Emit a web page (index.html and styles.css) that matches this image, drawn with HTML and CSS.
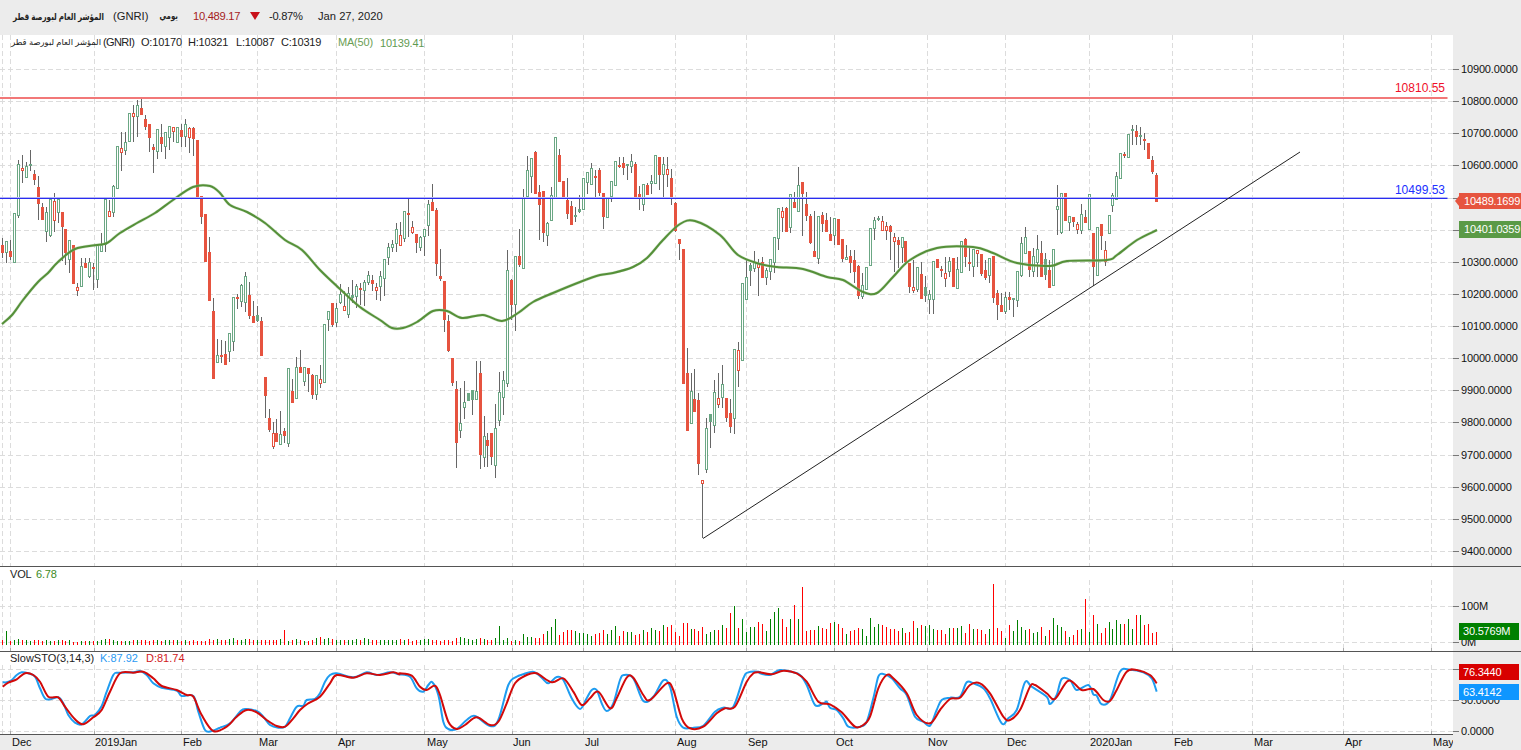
FILE: index.html
```html
<!DOCTYPE html>
<html lang="en">
<head>
<meta charset="utf-8">
<title>GNRI chart</title>
<link rel="stylesheet" href="styles.css">
</head>
<body>
<div class="app">
  <header class="topbar">
    <span class="name-ar" dir="rtl">المؤشر العام لبورصة قطر</span>
    <span class="sym">(GNRI)</span>
    <span class="period-ar" dir="rtl">يومي</span>
    <span class="price">10,489.17</span>
    <svg class="down" width="10" height="8" viewBox="0 0 10 8"><path d="M0 0H10L5 8Z" fill="#c8101a"/></svg>
    <span class="pct">-0.87%</span>
    <span class="date">Jan 27, 2020</span>
  </header>

  <section class="pane pane-main">
    <div class="plot">
      <svg id="main" class="layer" viewBox="0 35 1453 531"></svg>
      <div class="legend">
        <span class="leg-ar" dir="rtl">المؤشر العام لبورصة قطر</span>
        <span class="leg-sym">(GNRI)</span>
        <span class="leg-o">O:10170</span>
        <span class="leg-h">H:10321</span>
        <span class="leg-l">L:10087</span>
        <span class="leg-c">C:10319</span>
        <span class="leg-ma">MA(50)</span>
        <span class="leg-mav">10139.41</span>
      </div>
      <span class="level level-red">10810.55</span>
      <span class="level level-blue">10499.53</span>
    </div>
    <div class="axis" id="main-axis">
      <span class="tag tag-close">10489.1699</span>
      <span class="tag tag-ma">10401.0359</span>
    </div>
  </section>

  <section class="pane pane-vol">
    <div class="plot">
      <svg id="vol" class="layer" viewBox="0 567 1453 84"></svg>
      <div class="legend">
        <span class="leg-vol">VOL</span>
        <span class="leg-volv">6.78</span>
      </div>
    </div>
    <div class="axis" id="vol-axis">
      <span class="tag tag-vol">30.5769M</span>
    </div>
  </section>

  <section class="pane pane-sto">
    <div class="plot">
      <svg id="sto" class="layer" viewBox="0 652 1453 82"></svg>
      <div class="legend">
        <span class="leg-sto">SlowSTO(3,14,3)</span>
        <span class="leg-k">K:87.92</span>
        <span class="leg-d">D:81.74</span>
      </div>
    </div>
    <div class="axis" id="sto-axis">
      <span class="tag tag-d">76.3440</span>
      <span class="tag tag-k">63.4142</span>
    </div>
  </section>

  <footer class="timeaxis">
    <div class="timeplot" id="time"></div>
  </footer>
</div>
<script src="chart.js"></script>
</body>
</html>
```
FILE: styles.css
```css
* { box-sizing: border-box; }
html, body { margin: 0; padding: 0; background: #fff; overflow: hidden; }
body { font-family: "Liberation Sans", "DejaVu Sans", sans-serif; color: #222; }
.app { width: 1521px; height: 750px; display: flex; flex-direction: column; }

.topbar { height: 35px; background: #ececec; display: flex; align-items: center; padding-left: 13px; font-size: 11.2px; white-space: nowrap; padding-bottom: 3px; }
.name-ar { font-weight: bold; font-size: 9.5px; width: 91px; transform: scaleX(.757); transform-origin: right center; }
.sym { margin-left: 9px; width: 34px; }
.period-ar { margin-left: 12px; font-weight: bold; font-size: 9px; width: 19px; transform: scaleX(.78); transform-origin: right center; }
.price { margin-left: 15px; color: #a51c1c; width: 47px; letter-spacing: -.3px; }
.down { margin-left: 10px; }
.pct { margin-left: 9px; width: 35px; letter-spacing: -.3px; }
.date { margin-left: 14px; }

.pane { display: flex; border-bottom: 1px solid #555; }
.pane-main { height: 532px; }
.pane-vol { height: 85px; }
.pane-sto { height: 83px; border-bottom: 0; }
.pane-sto .plot { border-bottom: 1px solid #555; }

.plot { position: relative; width: 1453px; height: 100%; background: #fff; }
.layer { position: absolute; left: 0; top: 0; width: 1453px; height: 100%; display: block; }
.axis { position: relative; width: 68px; background: #ececec; font-size: 11px; color: #111; }

.legend { position: absolute; left: 10px; top: 0; display: flex; align-items: center; height: 14px; font-size: 11px; white-space: nowrap; letter-spacing: -.2px; }
.pane-sto .legend { top: -1px; letter-spacing: 0; }
.leg-ar { font-size: 8.4px; width: 90px; letter-spacing: 0; margin-left: 1px; }
.leg-sym { margin-left: 2px; width: 32px; letter-spacing: -.6px; }
.leg-o { margin-left: 6px; width: 41px; }
.leg-h { margin-left: 6px; width: 42px; }
.leg-l { margin-left: 6px; width: 39px; }
.leg-c { margin-left: 6px; width: 40px; }
.leg-ma { margin-left: 17px; width: 36px; color: #6b9e55; }
.leg-mav { margin-left: 6px; color: #5f9a52; margin-top: 1px; }
.leg-vol { width: 20px; }
.leg-volv { margin-left: 6px; color: #3c8a1e; }
.leg-sto { width: 82px; }
.leg-k { margin-left: 8px; color: #2b9af3; width: 38px; }
.leg-d { margin-left: 8px; color: #d0201c; }

.level { position: absolute; right: 8px; font-size: 12px; line-height: 14px; }
.level-red { top: 46px; color: #f0102a; }
.level-blue { top: 148px; color: #2030ff; }

.tick { position: absolute; left: 0; padding-left: 8px; height: 14px; line-height: 14px; white-space: nowrap; letter-spacing: -.15px; }
.tick::before { content: ""; position: absolute; left: 0; top: 7px; width: 6px; height: 1px; background: #777; }

.tag { position: absolute; left: 6px; color: #fff; font-size: 11px; letter-spacing: -.2px; line-height: 16px; height: 16px; padding-left: 4px; z-index: 2; white-space: nowrap; }
.tag-close { right: 0; top: 158px; padding-left: 5px; background: #e6543f; }
.tag-close::before { content: ""; position: absolute; left: -4px; top: 3px; border-style: solid; border-width: 5px 4px 5px 0; border-color: transparent #e6543f transparent transparent; }
.tag-ma { right: 0; top: 186px; height: 17px; padding-left: 5px; background: #5a9a46; }
.tag-vol { width: 60px; top: 56px; height: 17px; background: #008000; }
.tag-d { width: 60px; top: 12px; background: #d80000; }
.tag-k { width: 60px; top: 32px; background: #0f96ff; }

.timeaxis { height: 15px; background: #ececec; position: relative; font-size: 11px; }
.timeplot { position: relative; width: 1453px; height: 15px; overflow: hidden; }
.timelabel { position: absolute; top: 0; line-height: 14px; color: #111; white-space: nowrap; }
```
FILE: chart.js
```js
var NS = 'http://www.w3.org/2000/svg';
function el(parent, name, attrs) {
  var e = document.createElementNS(NS, name);
  for (var k in attrs) e.setAttribute(k, attrs[k]);
  parent.appendChild(e);
  return e;
}

/* Candles: type top bottom high low (page pixels). g hollow green, f filled green, r filled red, o hollow red */
var C = "r245,253,238,258 g241,253,241,263 r251,257,240,260 g213,263 g164,216,160,218 o168,171,155,183 g166,178,162,178 f164,166,150,171 r174,180,170,185 r187,204,176,220 r207,220,203,220 g212,232,207,242 g199,236,198,237 o201,221,193,232 g199,213,198,223 r212,227,212,261 r229,253,229,265 g240,260,240,273 r245,284 o287,291,283,296 g266,287,258,287 r263,268,258,268 g262,277,258,278 r267,269,263,290 g245,280,245,288 g245,252,233,252 g199,245,198,252 o211,217,200,217 g186,213,185,217 g146,189 o148,153,132,171 g142,151,132,155 g113,142 o113,117,105,142 g105,117,100,137 r108,115,98,115 r119,127,115,130 r124,138,124,152 r147,150,144,173 g129,152,129,159 r137,144,124,152 g132,147,132,159 g126,138,126,150 o127,132,127,142 g127,143 r130,137,124,147 g124,137,119,147 o128,138,127,153 r128,139,127,156 r140,197 r196,217,196,224 r214,262 r252,301,237,301 r311,379,298,379 " +
"g355,363,339,363 r355,356,340,363 r354,365,341,365 g333,352,333,362 g297,342,297,351 r297,299,294,309 g285,302,284,307 g276,303,272,312 r295,316,282,319 r316,323,301,323 f315,321,306,322 r321,356,317,356 r377,396,377,418 r418,430,409,432 o433,447,422,449 r433,442,419,442 g434,445,411,445 r431,436,428,443 g368,444,368,447 r391,403,379,403 g367,399,357,399 r367,373,350,373 g367,382,367,386 r368,374,368,392 r375,395,374,399 g375,395,375,400 o379,384,365,388 g324,383 g311,320,311,331 r303,325,303,327 g308,323,303,327 g294,303,284,304 o306,311,291,311 g293,315,287,318 f295,298,280,303 g286,297,284,308 r288,290,283,305 g282,291,280,306 g275,283,271,285 r280,284,275,291 o287,291,283,300 g276,287,271,301 " +
"g259,279,259,296 g247,258,243,265 g244,248,240,252 g229,244,223,252 o235,246,222,246 g211,239,211,242 r213,215,198,237 o227,233,221,234 r234,243,234,253 g237,248,236,251 g229,237,229,256 g204,226,200,236 r202,211,184,211 r210,264,208,276 r276,279,249,281 r281,320,281,332 r321,351,315,352 r358,383,358,386 r389,443,381,468 g423,431,388,438 g402,408,381,419 f393,401 f390,400,390,415 g391,400,361,400 r373,455,361,469 g436,458,416,467 r440,446,433,467 r433,457,433,465 g428,466,404,478 g392,421,372,426 g380,398,371,415 g270,384,250,387 r280,305,279,320 g256,305,256,331 r256,265,229,267 g197,269,189,269 g170,197,156,197 g158,177,158,193 r152,194,151,194 r192,205,185,240 r191,233,191,242 g223,236,222,246 g195,221,187,221 g137,199 r155,182,149,182 r181,197 r200,214,178,219 r206,225,201,225 f215,217,207,222 f209,212,195,213 g178,210 g172,183,172,194 g168,185,163,185 r176,178,170,197 r170,193,168,196 r193,217,193,229 g197,218 g181,197,181,202 g161,186 r165,167,157,168 r163,168,157,175 f164,166,164,180 g161,167,154,173 r164,197,162,197 r194,198,186,210 g184,205,184,211 r185,195,183,195 g181,184,175,194 g155,184 r157,175,157,190 g164,175,157,198 o169,175,157,187 r178,197,169,205 r203,231,202,232 r239,244,239,260 r249,384 r373,431,348,431 g391,424,373,424 r399,412,369,412 r400,464,393,475 o480,484,480,538 g428,470,418,473 f414,422,414,448 g392,426,380,433 o398,405,373,408 g384,398,365,408 r398,418,398,422 r413,427,399,433 g349,419,349,434 o350,371,342,387 g283,361 g277,300,260,300 f265,271,263,286 g262,269,251,272 o263,268,259,296 r262,278,257,278 g270,278,268,285 g259,272,259,280 " +
"g237,263,237,273 g208,239,208,250 o211,218,207,232 r208,232,207,232 g194,228,194,233 r202,208,192,208 g185,212,167,212 r182,194,182,236 r204,216,192,221 r216,243,214,244 r251,257,211,257 g216,259,216,264 r215,224,212,232 r220,232,213,232 r234,241,217,241 g218,236,218,245 r219,245 r239,259,239,262 g257,260,245,260 r256,263,250,273 r260,272,250,283 r266,296,265,299 g285,297,273,299 g267,290 g228,266 g220,229,217,240 f218,220,216,221 o221,231,216,231 o226,231,222,240 r226,232,225,260 o237,242,233,272 r240,245,237,268 g237,248,237,263 r241,262,241,265 r263,287,263,293 o287,291,260,293 g267,290,267,292 r274,299,262,299 f287,296,276,302 g294,300,290,314 g261,300,261,314 r259,268 r269,271,266,277 o273,279,257,287 g261,272,257,277 r258,287 g269,289,257,289 g241,273 r239,257,238,267 r262,264,248,271 g249,267,249,277 o250,254,250,267 r254,274,254,276 r270,278,260,280 g258,276,258,283 r256,298,256,303 r293,305,290,320 r305,312,293,312 g297,312,292,314 r297,300,292,310 f298,300,298,317 g271,301,271,307 g243,276,237,277 g237,254,227,254 r251,270,251,277 g256,272,248,277 g249,263,235,277 r253,277,241,277 f259,275,253,280 r270,288,260,288 g249,286 g206,210,185,235 g193,233,193,234 r193,221 g216,223,216,231 r217,222,217,227 o224,230,222,234 g214,231,204,234 r217,223,210,223 g194,230 r233,267,233,286 g227,276 r224,236,224,250 o250,262,241,266 g215,234 g195,206,193,212 g176,200,172,200 g153,179 r154,156,152,158 g134,158 f129,131,125,145 r131,137,125,145 f135,137,127,145 r139,141,133,150 r143,159 r160,172,156,174 r175,202,173,202";
var candles = C.split(' ').map(function (s) {
  var n = s.slice(1).split(',').map(Number);
  return { t: s[0], top: n[0], bot: n[1], h: n.length > 2 ? n[2] : n[0], l: n.length > 3 ? n[3] : n[1] };
});
function cx(i) { return Math.floor(2.3 + 3.981 * i); }

/* Volume bar heights */
var V0 = [5,14,4,5,6,5,5,4,5,5,4,5,4,4,5,5,4,5,3,3,4,4,4,4,4,5,6,6,5,4,4,4,4,5,5,5,5,4,5,5,4,5,5,5,5,4,5,4,5,4,4,4,6,5,6,5,5,6,7,5,5,6,6,5,5,5,5,5,5,5,6,15,4,5,6,5,4,4,5,7,8,6,7,6,5,5,5,5,5,6,5,7,6,5,5,5,5,5,5,5];
var V1 = [6,5,6,4,5,5,6,6,5,5,4,5,5,4,7,8,7,6,5,6,7,6,5,5,7,19,5,7,4,5,4,11,8,8,7,7,11,14,18,26,10,13,15,15,14,12,12,11,9,11,12,15,11,15,19,9,14,13,13,10,11,15,13,17,15,14,20,18,20,13,9,22,22,16,16,14,18,11,13,15,15,20,17,32,39,17,26,13,18,18,23];
var V2 = [21,14,26,33,37,26,18,26,40,26,58,14,15,15,19,17,16,22,23,21,17,11,14,15,17,16,9,27,18,21,20,18,16,16,14,17,12,13,24,17,20,19,20,16,15,15,11,17,17,17,19,12,21,16,16,15,11,16,61,17,14,7,20,14,25,18,15,16,12,13,18,9,15,27,20,18,14,8,10,15,16,46,13,30,21,12,17,23,16,25,21,21,26,16,30,30,20,21,12,13];
var vols = V0.concat(V1, V2);

var MA = [[2,324],[12,315],[23,300],[38,282],[48,273],[58,262],[75,249],[97,245],[107,243],[120,233],[137,223],[155,213],[173,200],[193,187],[210,186],[220,193],[230,205],[247,212],[265,223],[285,240],[302,250],[320,270],[340,289],[360,307],[380,320],[392,328],[403,328],[417,322],[433,311],[447,311],[462,318],[483,315],[502,321],[518,313],[533,302],[553,293],[580,282],[600,275],[613,273],[633,267],[647,258],[663,240],[680,224],[695,221],[720,235],[738,255],[760,264],[777,267],[803,269],[827,277],[843,280],[863,292],[877,293],[893,277],[910,260],[937,248],[973,247],[993,253],[1017,263],[1050,266],[1067,261],[1107,260],[1117,255],[1137,240],[1157,230]];

/* Stochastic traces: crop points at 3x, converted to page pixels */
function crop(x0, y0, pts) { return pts.map(function (p) { return [x0 + p[0] / 3, y0 + p[1] / 3]; }); }
var K = [].concat(
  crop(0,560,[[8,367],[20,367],[35,360],[50,345],[65,337],[85,340],[105,350],[120,385],[135,415],[150,418],[175,412],[190,430],[205,465],[225,488],[245,493],[270,468],[285,465],[305,438],[320,395],[340,345],[355,338],[400,337],[420,333],[440,345],[460,370],[485,383],[530,392],[545,408],[580,408],[595,455],[615,510],[635,513],[660,503],[690,490],[720,455],[735,447],[770,453],[790,470],[810,495],[835,503],[855,500],[870,475],[890,440],[910,437],[920,420],[945,417],[960,400],[975,365],[990,345],[1010,340],[1060,352],[1100,337],[1130,345],[1170,337],[1197,343]]),
  crop(400,575,[[0,298],[30,305],[50,340],[70,350],[85,330],[97,322],[115,360],[130,440],[145,462],[170,462],[200,435],[225,423],[270,453],[295,435],[325,330],[350,305],[370,298],[400,290],[425,308],[445,325],[470,306],[490,315],[515,370],[540,402],[560,370],[575,345],[590,345],[605,385],[620,408],[640,385],[660,315],[672,300],[700,310],[730,378],[760,365],[790,316],[810,335],[830,425],[850,458],[880,458],[910,452],[945,410],[970,398],[1000,395],[1030,310],[1045,292],[1077,290]]),
  crop(760,575,[[0,295],[30,300],[60,285],[100,292],[120,300],[140,330],[165,390],[190,385],[200,380],[210,398],[230,405],[250,430],[265,455],[300,455],[320,440],[340,370],[355,305],[370,297],[395,310],[420,340],[440,360],[465,425],[490,440],[510,452],[530,405],[545,375],[570,368],[600,365],[620,322],[640,325],[670,340],[690,370],[725,445],[745,430],[770,405],[795,322],[815,335],[860,365],[870,387],[890,360],[905,312],[930,315],[950,345],[985,330],[1000,358],[1010,362],[1025,388],[1050,375],[1080,290],[1110,284],[1150,292],[1175,310],[1190,350]]));
var D = [].concat(
  crop(0,560,[[8,380],[25,368],[50,358],[75,340],[100,345],[120,365],[145,410],[175,412],[195,440],[225,478],[250,493],[280,472],[305,450],[330,395],[360,340],[400,338],[430,335],[460,355],[485,378],[530,390],[560,405],[580,410],[605,465],[640,513],[680,500],[710,470],[740,450],[770,457],[800,480],[830,498],[855,500],[880,475],[900,450],[925,430],[960,410],[990,370],[1010,345],[1060,353],[1100,340],[1140,345],[1180,337],[1197,343]]),
  crop(400,575,[[0,295],[35,302],[60,335],[80,345],[105,332],[120,360],[145,440],[170,462],[195,450],[230,427],[270,450],[295,440],[320,385],[345,325],[380,300],[410,295],[455,322],[490,310],[520,350],[545,390],[570,370],[595,350],[630,400],[650,370],[680,308],[700,308],[730,360],[750,375],[800,325],[820,345],[845,430],[870,460],[910,455],[950,415],[975,400],[1005,395],[1040,320],[1060,295],[1077,292]]),
  crop(760,575,[[0,292],[35,298],[70,287],[110,295],[140,320],[175,380],[210,388],[245,412],[285,455],[310,450],[330,425],[355,340],[380,300],[400,310],[440,355],[470,420],[510,445],[540,405],[570,372],[600,368],[630,330],[660,325],[690,355],[730,425],[750,435],[780,405],[810,335],[825,330],[860,355],[885,372],[925,317],[965,345],[1000,342],[1030,375],[1050,378],[1070,345],[1100,290],[1130,285],[1170,300],[1190,325]]));

var GRIDX = [2.5,10.5,94.5,181.5,257.5,336.5,424.5,512.5,583.5,675.5,746.5,834.5,927.5,1005.5,1089.5,1172.5,1252.5,1343.5,1431.5];
var LABELS = [['Dec',12],['2019Jan',95],['Feb',183],['Mar',259],['Apr',338],['May',427],['Jun',513],['Jul',585],['Aug',677],['Sep',748],['Oct',836],['Nov',928],['Dec',1007],['2020Jan',1090],['Feb',1174],['Mar',1254],['Apr',1345],['May',1433]];

function smooth(pts) {
  var d = 'M' + pts[0][0].toFixed(1) + ' ' + pts[0][1].toFixed(1);
  for (var i = 0; i < pts.length - 1; i++) {
    var p0 = pts[Math.max(i - 1, 0)], p1 = pts[i], p2 = pts[i + 1], p3 = pts[Math.min(i + 2, pts.length - 1)];
    var c1x = p1[0] + (p2[0] - p0[0]) / 6, c1y = p1[1] + (p2[1] - p0[1]) / 6;
    var c2x = p2[0] - (p3[0] - p1[0]) / 6, c2y = p2[1] - (p3[1] - p1[1]) / 6;
    d += 'C' + c1x.toFixed(1) + ' ' + c1y.toFixed(1) + ' ' + c2x.toFixed(1) + ' ' + c2y.toFixed(1) + ' ' + p2[0].toFixed(1) + ' ' + p2[1].toFixed(1);
  }
  return d;
}
function grid(svg, ys, y0, y1, stub) {
  ys.forEach(function (y) {
    el(svg, 'line', { x1: 0, x2: 1453, y1: y + .5, y2: y + .5, stroke: '#dcdcdc', 'stroke-dasharray': '5 3' });
  });
  GRIDX.forEach(function (x) {
    el(svg, 'line', { x1: x, x2: x, y1: y0, y2: y1, stroke: '#dcdcdc', 'stroke-dasharray': '5 3' });
    if (stub && x > 3) el(svg, 'line', { x1: x, x2: x, y1: y1 - 3, y2: y1, stroke: '#aaa' });
  });
}
function ticks(id, items, top) {
  var ax = document.getElementById(id);
  items.forEach(function (it) {
    var s = document.createElement('span');
    s.className = 'tick';
    s.textContent = it[0];
    s.style.top = (it[1] - top - 7) + 'px';
    ax.insertBefore(s, ax.firstChild);
  });
}

/* Main pane */
var main = document.getElementById('main');
var ys = [], tk = [];
for (var v = 0; v < 16; v++) {
  var y = Math.round(69 + v * 32.13);
  ys.push(y);
  tk.push([(10900 - v * 100) + '.0000', y]);
}
grid(main, ys, 35, 566, false);
ticks('main-axis', tk, 35);

var GREEN = '#6ba784', RED = '#e6533f';
var cg = el(main, 'g', { 'shape-rendering': 'crispEdges' });
candles.forEach(function (c, i) {
  var x = cx(i), h = c.bot - c.top;
  el(cg, 'rect', { x: x, y: c.h, width: 1, height: c.l - c.h, fill: '#666' });
  if (c.t === 'r' || c.t === 'f') {
    el(cg, 'rect', { x: x - 1, y: c.top, width: 3, height: Math.max(h, 2), fill: c.t === 'r' ? RED : GREEN });
  } else {
    el(cg, 'rect', { x: x - 0.5, y: c.top + .5, width: 2, height: Math.max(h - 1, 1), fill: '#fff', stroke: c.t === 'o' ? RED : GREEN });
  }
});
el(main, 'path', { d: smooth(MA), fill: 'none', stroke: '#a9cc9c', 'stroke-width': 3, opacity: .5 });
el(main, 'path', { d: smooth(MA), fill: 'none', stroke: '#559039', 'stroke-width': 2 });

el(main, 'rect', { x: 0, y: 97, width: 1447.5, height: 2, fill: '#f27878' });
el(main, 'rect', { x: 0, y: 197, width: 1447.5, height: 2, fill: '#b3b6f5' });
el(main, 'rect', { x: 0, y: 198, width: 1447.5, height: 1, fill: '#2a2cf0' });
el(main, 'line', { x1: 703, y1: 538.5, x2: 1300, y2: 152, stroke: '#222', 'stroke-width': 1 });

/* Volume pane */
var vol = document.getElementById('vol');
grid(vol, [606, 642], 580, 651, true);
ticks('vol-axis', [['100M', 606], ['0M', 642]], 567);
var vg = el(vol, 'g', { 'shape-rendering': 'crispEdges' });
vols.forEach(function (h, i) {
  var t = candles[i] ? candles[i].t : 'r';
  el(vg, 'rect', { x: cx(i), y: 645 - h, width: 1, height: h, fill: (t === 'r' || t === 'o') ? '#f00' : '#008000' });
});

/* Stochastic pane */
var sto = document.getElementById('sto');
grid(sto, [669, 700, 731], 665, 734, true);
ticks('sto-axis', [['100.0000', 669], ['50.0000', 700], ['0.0000', 731]], 652);
el(sto, 'path', { d: smooth(K), fill: 'none', stroke: '#1e9cf0', 'stroke-width': 2 });
el(sto, 'path', { d: smooth(D), fill: 'none', stroke: '#d20a0a', 'stroke-width': 2 });

/* Time axis */
var time = document.getElementById('time');
LABELS.forEach(function (l) {
  var s = document.createElement('span');
  s.className = 'timelabel';
  s.textContent = l[0];
  s.style.left = l[1] + 'px';
  time.appendChild(s);
});
```
